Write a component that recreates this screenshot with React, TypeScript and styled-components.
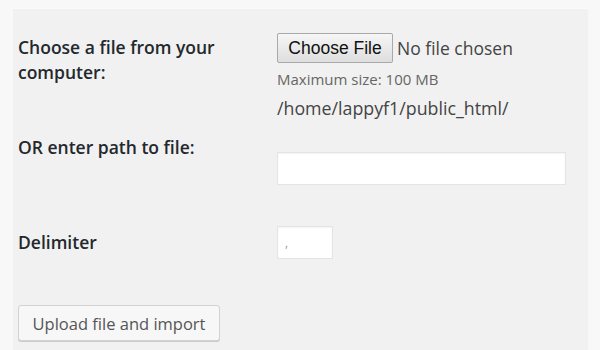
import React from 'react';
import styled, { createGlobalStyle } from 'styled-components';

const GlobalStyle = createGlobalStyle`
  html, body {
    margin: 0;
    padding: 0;
    background: #f8f8f8;
    font-family: "Open Sans", "Liberation Sans", sans-serif;
  }
`;

const Page = styled.div`
  width: 600px;
  height: 350px;
  overflow: hidden;
  padding: 8px 12px 0 13px;
  box-sizing: border-box;
`;

const Panel = styled.form`
  background: #f1f1f1;
  border-top: 1px solid #fbfbfb;
  height: 360px;
  padding: 22px 0 0 5px;
  box-sizing: border-box;
`;

const Row = styled.div<{ $height: number }>`
  display: grid;
  grid-template-columns: 259px 1fr;
  height: ${(p) => p.$height}px;
`;

const Label = styled.label<{ $top: number }>`
  padding-top: ${(p) => p.$top}px;
  font-size: 17.5px;
  font-weight: 600;
  line-height: 25px;
  color: #23282d;
`;

const Field = styled.div<{ $top: number }>`
  display: flex;
  flex-direction: column;
  align-items: flex-start;
  padding-top: ${(p) => p.$top}px;
`;

const FileLine = styled.div`
  display: flex;
  align-items: center;
  gap: 4px;
`;

const FileButton = styled.button`
  font-family: "Liberation Sans", Arial, sans-serif;
  font-size: 17.5px;
  color: #111;
  height: 30px;
  width: 116px;
  padding: 0;
  border: 1px solid #a9a9a9;
  border-radius: 2px;
  background: linear-gradient(#f6f6f6, #dedede);
`;

const NoFile = styled.span`
  font-size: 17.5px;
  color: #444;
`;

const Hint = styled.p`
  margin: 5px 0 0;
  font-size: 15px;
  line-height: 23px;
  color: #666;
`;

const Path = styled.div`
  font-size: 17.8px;
  color: #444;
  line-height: 26px;
`;

const TextInput = styled.input<{ $width: number; $top: number }>`
  width: ${(p) => p.$width}px;
  height: 33px;
  margin-top: ${(p) => p.$top}px;
  box-sizing: border-box;
  background: #fff;
  border: 1px solid #e4e4e4;
  box-shadow: inset 0 1px 2px rgba(0, 0, 0, 0.05);
  font-family: "Open Sans", sans-serif;
  font-size: 12px;
  color: #999;
  padding: 0 7px;
  outline: none;
`;

const SubmitButton = styled.button`
  height: 36px;
  width: 202px;
  font-family: "Open Sans", sans-serif;
  font-size: 16.5px;
  color: #555;
  background: #f7f7f7;
  border: 1px solid #d2d2d2;
  border-radius: 3px;
  box-shadow: 0 1px 0 #ccc;
  padding: 0;
`;

export default function App() {
  return (
    <Page>
      <GlobalStyle />
      <Panel>
        <Row $height={62}>
          <Label $top={4}>
            Choose a file from your
            <br />
            computer:
          </Label>
          <Field $top={2}>
            <FileLine>
              <FileButton type="button">Choose File</FileButton>
              <NoFile>No file chosen</NoFile>
            </FileLine>
            <Hint>Maximum size: 100 MB</Hint>
          </Field>
        </Row>
        <Row $height={110}>
          <Label $top={42}>OR enter path to file:</Label>
          <Field $top={2}>
            <Path>/home/lappyf1/public_html/</Path>
            <TextInput $width={289} $top={31} />
          </Field>
        </Row>
        <Row $height={102}>
          <Label $top={27}>Delimiter</Label>
          <Field $top={0}>
            <TextInput $width={56} $top={23} defaultValue="," />
          </Field>
        </Row>
        <SubmitButton type="submit">Upload file and import</SubmitButton>
      </Panel>
    </Page>
  );
}
